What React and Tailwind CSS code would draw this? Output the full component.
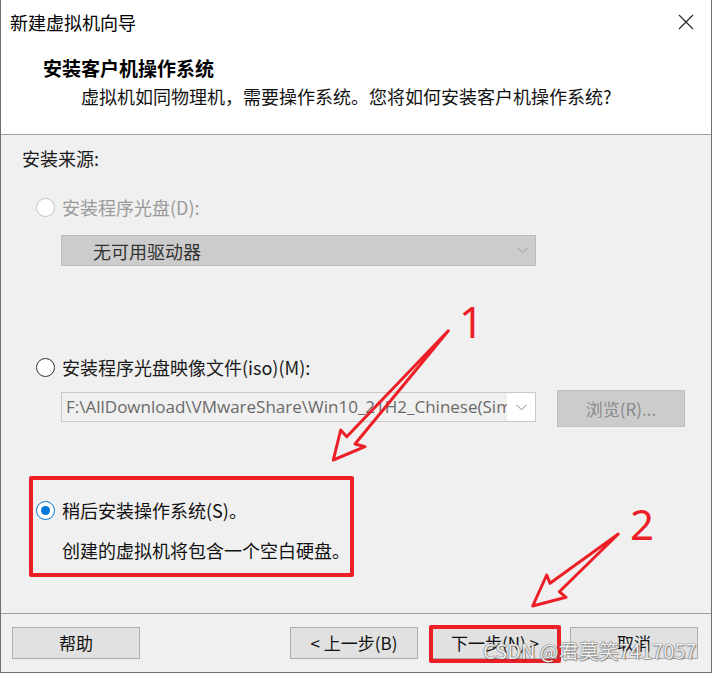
import React from "react";

function Radio({ state }) {
  if (state === "disabled")
    return <span className="block w-[19px] h-[19px] rounded-full border border-[#c4c4c4] bg-white shrink-0" />;
  if (state === "checked")
    return (
      <span className="flex items-center justify-center w-[19px] h-[19px] rounded-full border-[1.5px] border-[#0078d7] bg-white shrink-0">
        <span className="block w-[9px] h-[9px] rounded-full bg-[#0078d7]" />
      </span>
    );
  return <span className="block w-[19px] h-[19px] rounded-full border-[1.5px] border-[#333333] bg-white shrink-0" />;
}

function Chevron({ color }) {
  return (
    <svg width="11" height="7" viewBox="0 0 11 7" className="shrink-0">
      <path d="M0.5 0.8 L5.5 5.8 L10.5 0.8" fill="none" stroke={color} strokeWidth="1" />
    </svg>
  );
}

function Btn({ children, className }) {
  return (
    <div className={"w-[128px] h-[32px] bg-[#e1e1e1] border border-[#adadad] flex items-center justify-center text-[17px] leading-[24px] text-[#111] " + className}>
      {children}
    </div>
  );
}

export default function App() {
  return (
    <div className="relative w-[712px] h-[673px] bg-[#f0f0f0] border-x border-b border-[#6f6f6f] font-['Noto_Sans_CJK_SC',sans-serif] text-[#1a1a1a] overflow-hidden flex flex-col">
      {/* header */}
      <div className="h-[135px] shrink-0 bg-white border-b border-[#a0a0a0] flex flex-col">
        <div className="h-[44px] flex items-center justify-between pl-[9px] pr-[17px]">
          <span className="text-[18px] leading-[24px] text-[#000]">新建虚拟机向导</span>
          <svg width="16" height="16" viewBox="0 0 16 16">
            <path d="M1 1 L15 15 M15 1 L1 15" stroke="#222" strokeWidth="1.1" fill="none" />
          </svg>
        </div>
        <div className="pl-[42px] mt-[12px] text-[19px] leading-[24px] font-bold text-[#000]">安装客户机操作系统</div>
        <div className="pl-[80px] mt-[4px] text-[18px] leading-[24px] text-[#111]">
          虚拟机如同物理机，需要操作系统。您将如何安装客户机操作系统?
        </div>
      </div>

      {/* body */}
      <div className="h-[478px] shrink-0 flex flex-col">
        <div className="mt-[11px] ml-[21px] text-[18px] leading-[24px]">安装来源:</div>

        <div className="mt-[25px] ml-[35px] h-[24px] flex items-center">
          <Radio state="disabled" />
          <span className="ml-[7px] text-[18px] leading-[24px] text-[#9a9a9a]">安装程序光盘(D):</span>
        </div>

        <div className="mt-[16px] ml-[60px] w-[475px] h-[31px] bg-[#cccccc] border border-[#bcbcbc] flex items-center justify-between pl-[31px] pr-[7px]">
          <span className="text-[18px] leading-[24px] text-[#333]">无可用驱动器</span>
          <Chevron color="#9a9a9a" />
        </div>

        <div className="mt-[89px] ml-[35px] h-[24px] flex items-center">
          <Radio state="normal" />
          <span className="ml-[7px] text-[18px] leading-[24px] text-[#1a1a1a]">安装程序光盘映像文件(iso)(M):</span>
        </div>

        <div className="mt-[11px] ml-[60px] flex items-start">
          <div className="mt-[2px] w-[475px] h-[30px] bg-white border border-[#c9c9c9] flex items-stretch">
            <div className="w-[445px] bg-[#f0f0f0] overflow-hidden whitespace-nowrap pl-[4px] flex items-center font-['Open_Sans',sans-serif] text-[17px] text-[#6a6a6a]">
              F:\AllDownload\VMwareShare\Win10_21H2_Chinese(Simplified)_x64.iso
            </div>
            <div className="flex-1 flex items-center justify-center">
              <Chevron color="#8a8a8a" />
            </div>
          </div>
          <div className="ml-[21px] w-[128px] h-[37px] bg-[#cccccc] border border-[#bfbfbf] flex items-center justify-center text-[17px] leading-[24px] text-[#8a8a8a]">
            浏览(R)...
          </div>
        </div>

        <div className="mt-[71px] ml-[35px] h-[24px] flex items-center">
          <Radio state="checked" />
          <span className="ml-[7px] text-[18px] leading-[24px] text-[#111]">稍后安装操作系统(S)。</span>
        </div>
        <div className="mt-[16px] ml-[61px] text-[18px] leading-[24px] text-[#111]">创建的虚拟机将包含一个空白硬盘。</div>
      </div>

      {/* footer */}
      <div className="h-[59px] shrink-0 border-t border-[#a0a0a0] flex items-start pt-[13px]">
        <Btn className="ml-[11px]">帮助</Btn>
        <Btn className="ml-[150px]">&lt; 上一步(B)</Btn>
        <Btn className="ml-[13px]">下一步(N) &gt;</Btn>
        <Btn className="ml-[11px]">取消</Btn>
      </div>

      {/* annotations */}
      <div className="absolute left-[28px] top-[476px] w-[325px] h-[101px] border-4 border-[#ec1f27] rounded-[2px]" />
      <div className="absolute left-[428px] top-[625px] w-[132px] h-[38px] border-4 border-[#ec1f27] rounded-[2px]" />
      <svg className="absolute left-[-1px] top-0 pointer-events-none" width="712" height="673" viewBox="0 0 712 673">
        <polygon
          points="448.3,330.7 346.7,436.7 340.7,430 333.3,460 365,446.7 355,444"
          fill="none" stroke="#ec1f27" strokeWidth="3" strokeLinejoin="round"
        />
        <polygon
          points="618.3,534 550,583.3 546.7,575 532.7,606 566,597.3 559.3,591.7"
          fill="none" stroke="#ec1f27" strokeWidth="3" strokeLinejoin="round"
        />
        <text x="459" y="338" fontSize="43" fill="#ec1f27" fontFamily="Noto Sans, sans-serif">1</text>
        <text x="630" y="540" fontSize="42" fill="#ec1f27" fontFamily="Noto Sans, sans-serif">2</text>
      </svg>
      <div className="absolute left-[482px] top-[639px] text-[20px] leading-[24px] text-white/90 whitespace-nowrap [text-shadow:0_0_1px_#555,0_0_1px_#555,1px_1px_1px_rgba(0,0,0,0.3)]">
        CSDN @君莫笑7417057
      </div>
    </div>
  );
}
